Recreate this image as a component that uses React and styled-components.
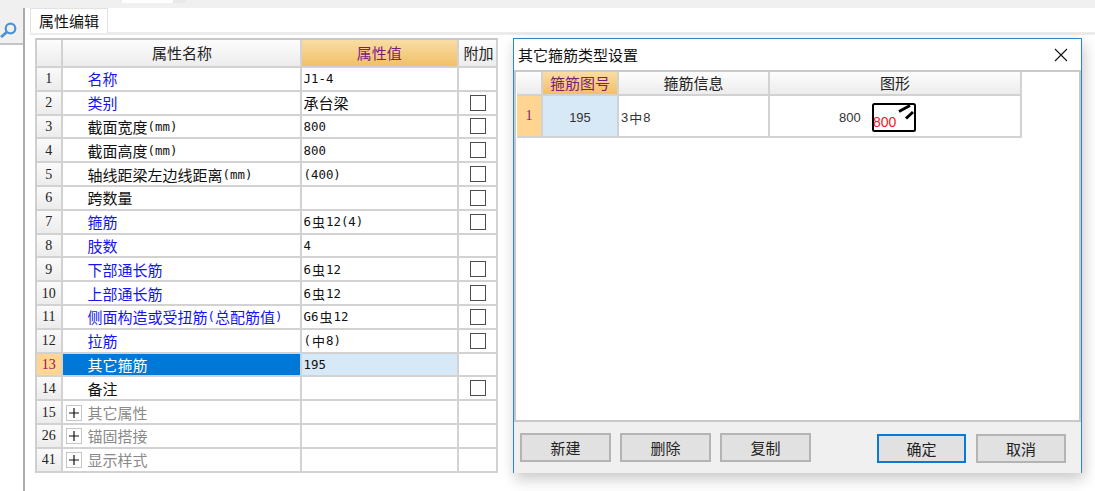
import React from "react";
import styled, { createGlobalStyle } from "styled-components";

const GlobalStyle = createGlobalStyle`
  html, body {
    margin: 0;
    padding: 0;
    background: #fff;
  }
  * {
    box-sizing: border-box;
  }
`;

const CJK = `"Noto Sans CJK SC", "Liberation Sans", sans-serif`;
const LINE = "#d2d2d2";

const Page = styled.div`
  position: relative;
  width: 1095px;
  height: 491px;
  overflow: hidden;
  background: #fff;
  font-family: ${CJK};
  font-size: 15px;
  color: #111;
`;

const TopStrip = styled.div`
  height: 8px;
  background: #f0f0f0;
  padding-left: 122px;
`;

const TopTab = styled.div`
  width: 64px;
  height: 3px;
  background: #fff;
  border-right: 13px solid #e9e9e9;
`;

const Body = styled.div`
  display: flex;
  height: 483px;
`;

const Rail = styled.div`
  width: 23px;
  background: #fff;
`;

const RailButton = styled.div`
  height: 37px;
  padding-top: 13px;
  background: #f0f0f0;
  border-bottom: 2px solid #c4c4c4;
  overflow: hidden;
`;

const RailDivider = styled.div`
  width: 2px;
  background: #ababab;
`;

const Main = styled.div`
  flex: 1;
  padding-left: 5px;
`;

const TabBar = styled.div`
  height: 27px;
  display: flex;
  border-bottom: 3px solid #ececec;
`;

const Tab = styled.div`
  width: 78px;
  height: 25px;
  border: 1px solid #e2e2e2;
  border-bottom: 0;
  background: #fff;
  text-align: center;
  line-height: 24px;
`;

const Grid = styled.div`
  width: 463px;
  margin: 3px 0 0 5px;
  border-left: 2px solid #cfcfcf;
  border-top: 2px solid #c8c8c8;
`;

const Row = styled.div`
  display: grid;
  grid-template-columns: 25.5px 239px 157.5px 39px;
  height: ${({ $head }) => ($head ? "28px" : "23.8px")};
`;

const Cell = styled.div`
  display: flex;
  align-items: center;
  min-width: 0;
  white-space: nowrap;
  border-right: 2px solid ${LINE};
  border-bottom: 2px solid ${LINE};
  line-height: 20px;
`;

const HeadCell = styled(Cell)`
  justify-content: center;
  padding-left: ${({ $nudge }) => ($nudge ? "2px" : "0")};
  background: ${({ $active }) =>
    $active
      ? "linear-gradient(#f9dda4, #f1c068)"
      : "linear-gradient(#fdfdfd, #ececec)"};
  color: ${({ $active }) => ($active ? "#7d1c74" : "#222")};
`;

const NumCell = styled(Cell)`
  justify-content: center;
  padding-top: 1px;
  background: ${({ $active }) =>
    $active ? "#ffd591" : "linear-gradient(#fafafa, #ececec)"};
  color: ${({ $active }) => ($active ? "#8a1a5c" : "#222")};
  font-family: "Liberation Serif", serif;
  font-size: 14px;
`;

const NameCell = styled(Cell)`
  padding-left: ${({ $group }) => ($group ? "3px" : "25px")};
  padding-top: 1px;
  background: ${({ $selected }) => ($selected ? "#0078d7" : "#fff")};
  color: ${({ $selected, $blue, $group }) =>
    $selected ? "#fff" : $blue ? "#1414f0" : $group ? "#8a8a8a" : "#111"};
`;

const ValueCell = styled(Cell)`
  padding-left: 2px;
  padding-top: 1px;
  background: ${({ $selected }) => ($selected ? "#d7e8f7" : "#fff")};
`;

const ExtraCell = styled(Cell)`
  justify-content: center;
  padding-left: 1px;
`;

const Half = styled.span`
  font-family: "DejaVu Sans Mono", monospace;
  font-size: 12.4px;
`;

const Rebar = styled.span`
  font-size: 13px;
  padding: 0 1px;
`;

const CheckBox = styled.span`
  display: block;
  width: 16px;
  height: 16px;
  border: 1px solid #4d4d4d;
  background: #fff;
`;

const Expander = styled.span`
  display: flex;
  align-items: center;
  justify-content: center;
  width: 16px;
  height: 16px;
  margin-right: 6px;
  border: 1px solid #c6c6c6;
  background: #fff;
`;

const Dialog = styled.div`
  position: absolute;
  left: 513px;
  top: 38px;
  width: 569px;
  height: 435px;
  display: flex;
  flex-direction: column;
  background: #f0f0f0;
  border: 1px solid #2f86c9;
  border-bottom: 0;
  box-shadow: 2px 6px 14px rgba(0, 0, 0, 0.22);
`;

const TitleBar = styled.div`
  height: 31px;
  flex: none;
  display: flex;
  align-items: center;
  justify-content: space-between;
  padding: 0 13px 0 4px;
  background: #fff;
  font-size: 15px;
`;

const Sheet = styled.div`
  height: 352px;
  flex: none;
  padding: 0 0 0 1px;
  background: #fff;
  border: 2px solid #c9c9c9;
`;

const SheetRow = styled.div`
  display: grid;
  grid-template-columns: 26px 76px 151px 252px;
  height: ${({ $head }) => ($head ? "24px" : "42px")};
`;

const SheetIndex = styled(Cell)`
  justify-content: center;
  background: #ffd591;
  color: #7d1c74;
  font-family: "Liberation Serif", serif;
  font-size: 14px;
`;

const SheetCell = styled(Cell)`
  justify-content: ${({ $align }) => $align || "flex-start"};
  padding-left: ${({ $pad }) => $pad || "0"};
  padding-top: 3px;
  background: ${({ $active }) => ($active ? "#d7e8f7" : "#fff")};
  font-size: 13px;
  color: #333;
`;

const Sans = styled.span`
  font-family: "Liberation Sans", sans-serif;
`;

const ShapeGap = styled.span`
  width: 11px;
`;

const Footer = styled.div`
  flex: 1;
  display: flex;
  align-items: flex-start;
  justify-content: space-between;
  padding: 0 15px 0 6px;
`;

const ButtonGroup = styled.div`
  display: flex;
  gap: ${({ $gap }) => $gap};
  margin-top: ${({ $top }) => $top};
`;

const Button = styled.button`
  width: ${({ $wide }) => $wide || "91px"};
  height: 29px;
  padding: 0;
  background: #e1e1e1;
  border: 2px solid ${({ $primary }) => ($primary ? "#0a78d7" : "#b4b4b4")};
  font-family: ${CJK};
  font-size: 15px;
  color: #222;
`;

const rows = [
  { no: 1, name: "名称", value: "J1-4", blue: true, noCheck: true },
  { no: 2, name: "类别", value: "承台梁", blue: true },
  { no: 3, name: "截面宽度(mm)", value: "800" },
  { no: 4, name: "截面高度(mm)", value: "800" },
  { no: 5, name: "轴线距梁左边线距离(mm)", value: "(400)" },
  { no: 6, name: "跨数量", value: "" },
  { no: 7, name: "箍筋", value: "6虫12(4)", blue: true },
  { no: 8, name: "肢数", value: "4", blue: true, noCheck: true },
  { no: 9, name: "下部通长筋", value: "6虫12", blue: true },
  { no: 10, name: "上部通长筋", value: "6虫12", blue: true },
  { no: 11, name: "侧面构造或受扭筋(总配筋值)", value: "G6虫12", blue: true },
  { no: 12, name: "拉筋", value: "(中8)", blue: true },
  { no: 13, name: "其它箍筋", value: "195", selected: true, noCheck: true },
  { no: 14, name: "备注", value: "" },
  { no: 15, name: "其它属性", group: true },
  { no: 26, name: "锚固搭接", group: true },
  { no: 41, name: "显示样式", group: true },
];

// latin runs are half width next to the 15px hanzi, as in the source app
function Mixed({ text }) {
  return text
    .split(/([\x00-\x7f]+|[虫中])/)
    .filter(Boolean)
    .map((part, i) => {
      if (/^[\x00-\x7f]/.test(part)) return <Half key={i}>{part}</Half>;
      if (/^[虫中]$/.test(part)) return <Rebar key={i}>{part}</Rebar>;
      return part;
    });
}

function SearchIcon() {
  return (
    <svg width="17" height="16" viewBox="0 0 17 16" fill="none" stroke="#4a94d6" strokeWidth="2.2">
      <circle cx="10.5" cy="6.5" r="4.8" />
      <path d="M7 10 L1 15" strokeWidth="2.8" />
    </svg>
  );
}

function PlusIcon() {
  return (
    <svg width="10" height="10" viewBox="0 0 10 10" stroke="#111" strokeWidth="1.2">
      <path d="M0 5 H10 M5 0 V10" />
    </svg>
  );
}

function CloseIcon() {
  return (
    <svg width="14" height="14" viewBox="0 0 14 14" stroke="#111" strokeWidth="1.1">
      <path d="M1 1 L13 13 M13 1 L1 13" />
    </svg>
  );
}

function StirrupShape() {
  return (
    <svg width="44" height="29" viewBox="0 0 44 29" fill="none">
      <rect x="1" y="1" width="42" height="27" rx="1.5" stroke="#000" strokeWidth="2" />
      <path d="M27 8.5 L38 2.5 M34 15.5 L41 9" stroke="#000" strokeWidth="3" />
      <text x="1" y="24" fill="#f5141e" fontFamily="Liberation Sans, sans-serif" fontSize="14">800</text>
    </svg>
  );
}

export default function App() {
  return (
    <Page>
      <GlobalStyle />
      <TopStrip>
        <TopTab />
      </TopStrip>
      <Body>
        <Rail>
          <RailButton>
            <SearchIcon />
          </RailButton>
        </Rail>
        <RailDivider />
        <Main>
          <TabBar>
            <Tab>属性编辑</Tab>
          </TabBar>
          <Grid>
            <Row $head>
              <HeadCell />
              <HeadCell $nudge>属性名称</HeadCell>
              <HeadCell $active>属性值</HeadCell>
              <HeadCell $nudge>附加</HeadCell>
            </Row>
            {rows.map((row) => (
              <Row key={row.no}>
                <NumCell $active={row.selected}>{row.no}</NumCell>
                <NameCell $blue={row.blue} $selected={row.selected} $group={row.group}>
                  {row.group && (
                    <Expander>
                      <PlusIcon />
                    </Expander>
                  )}
                  <Mixed text={row.name} />
                </NameCell>
                <ValueCell $selected={row.selected}>
                  <Mixed text={row.value || ""} />
                </ValueCell>
                <ExtraCell>{!row.group && !row.noCheck && <CheckBox />}</ExtraCell>
              </Row>
            ))}
          </Grid>
        </Main>
      </Body>

      <Dialog>
        <TitleBar>
          其它箍筋类型设置
          <CloseIcon />
        </TitleBar>
        <Sheet>
          <SheetRow $head>
            <HeadCell />
            <HeadCell $active>箍筋图号</HeadCell>
            <HeadCell>箍筋信息</HeadCell>
            <HeadCell>图形</HeadCell>
          </SheetRow>
          <SheetRow>
            <SheetIndex>1</SheetIndex>
            <SheetCell $active $align="center">
              <Sans>195</Sans>
            </SheetCell>
            <SheetCell $pad="2px">
              <Sans>3</Sans>
              <Rebar>中</Rebar>
              <Sans>8</Sans>
            </SheetCell>
            <SheetCell $pad="69px">
              <Sans>800</Sans>
              <ShapeGap />
              <StirrupShape />
            </SheetCell>
          </SheetRow>
        </Sheet>
        <Footer>
          <ButtonGroup $gap="9px" $top="11px">
            <Button>新建</Button>
            <Button>删除</Button>
            <Button>复制</Button>
          </ButtonGroup>
          <ButtonGroup $gap="10px" $top="12px">
            <Button $primary $wide="89px">确定</Button>
            <Button $wide="90px">取消</Button>
          </ButtonGroup>
        </Footer>
      </Dialog>
    </Page>
  );
}
